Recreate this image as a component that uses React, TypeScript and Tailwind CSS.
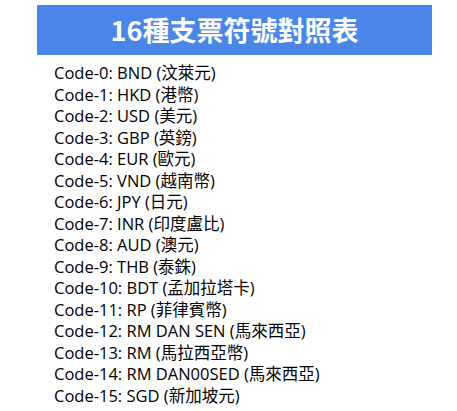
import React from "react";

const rows = [
  "Code-0: BND (汶萊元)",
  "Code-1: HKD (港幣)",
  "Code-2: USD (美元)",
  "Code-3: GBP (英鎊)",
  "Code-4: EUR (歐元)",
  "Code-5: VND (越南幣)",
  "Code-6: JPY (日元)",
  "Code-7: INR (印度盧比)",
  "Code-8: AUD (澳元)",
  "Code-9: THB (泰銖)",
  "Code-10: BDT (孟加拉塔卡)",
  "Code-11: RP (菲律賓幣)",
  "Code-12: RM DAN SEN (馬來西亞)",
  "Code-13: RM (馬拉西亞幣)",
  "Code-14: RM DAN00SED (馬來西亞)",
  "Code-15: SGD (新加坡元)",
];

export default function App() {
  return (
    <div className="w-[457px] h-[411px] bg-white overflow-hidden">
      <div className="pt-[5px] pl-[37px]">
        <div
          className="w-[395px] h-[50px] bg-[#4a86e8] flex items-center justify-center text-white font-bold text-[27px]"
          style={{ fontFamily: '"Noto Sans CJK TC", "Noto Sans", sans-serif' }}
        >
          16種支票符號對照表
        </div>
      </div>
      <div
        className="pl-[54px] pt-[7px] text-[16.5px] leading-[21.5px] text-black"
        style={{ fontFamily: '"Open Sans", "Noto Sans CJK TC", sans-serif' }}
      >
        {rows.map((r) => (
          <div key={r} className="whitespace-nowrap">{r}</div>
        ))}
      </div>
    </div>
  );
}
